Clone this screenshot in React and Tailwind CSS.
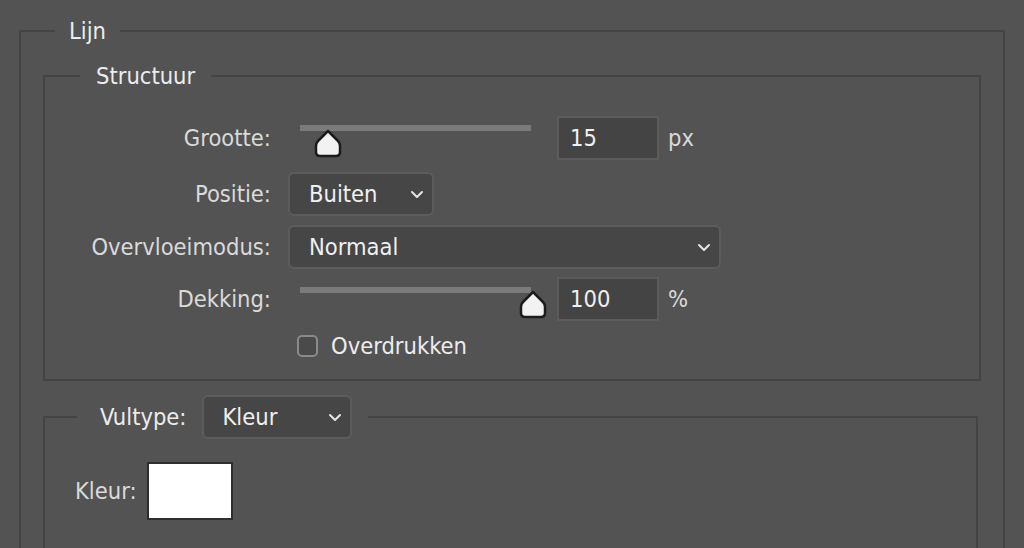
import React from "react";

const font = { fontFamily: '"DejaVu Sans Condensed", "DejaVu Sans", Tahoma, sans-serif' };

const Chevron = () => (
  <svg width="14" height="9" viewBox="0 0 14 9" fill="none">
    <path d="M2 2 L7 7 L12 2" stroke="#e6e6e6" strokeWidth="2" strokeLinecap="round" strokeLinejoin="round" />
  </svg>
);

const Thumb = () => (
  <svg width="28" height="29" viewBox="0 0 28 29">
    <path
      d="M14 2 L24 12 Q26 14 26 17 L26 23 Q26 27 22 27 L6 27 Q2 27 2 23 L2 17 Q2 14 4 12 Z"
      fill="#f2f2f2"
      stroke="#1c1c1c"
      strokeWidth="2.5"
      strokeLinejoin="round"
    />
  </svg>
);

const Label = ({ children }) => (
  <div className="w-[226px] shrink-0 text-right text-[#dadada]">{children}</div>
);

const Slider = ({ pos, trackTop }) => (
  <div className="relative ml-[29px] h-[44px] w-[231px] shrink-0">
    <div className={`absolute left-0 right-0 h-[6px] bg-[#7b7b7b] ${trackTop}`} />
    <div className="absolute" style={{ left: pos - 14, top: 13 }}>
      <Thumb />
    </div>
  </div>
);

const NumberBox = ({ value, unit }) => (
  <>
    <div className="ml-[26px] flex h-[44px] w-[102px] items-center border-2 border-[#5c5c5c] bg-[#444444] pl-[11px] text-[#f0f0f0]">
      {value}
    </div>
    <div className="ml-[9px] text-[#dadada]">{unit}</div>
  </>
);

const Select = ({ value, width, className = "" }) => (
  <div
    className={`flex h-[44px] items-center justify-between rounded-[6px] border-2 border-[#5c5c5c] bg-[#464646] pl-[19px] pr-[8px] text-[#f0f0f0] ${width} ${className}`}
  >
    <span>{value}</span>
    <Chevron />
  </div>
);

export default function App() {
  return (
    <div className="h-[548px] overflow-hidden bg-[#535353] px-[19px] pt-[20px] text-[23.5px] leading-[22px]" style={font}>
      <fieldset className="border-2 border-[#444444] px-[22px] pt-[23px] pb-[200px] rounded-[2px]">
        <legend className="ml-[12px] px-[14px] text-[#ececec]">Lijn</legend>

        <fieldset className="border-2 border-[#444444] pt-[29px] pb-[22px] rounded-[2px]">
          <legend className="ml-[35px] px-[16px] text-[#ececec]">Structuur</legend>

          <div className="flex h-[44px] items-center">
            <Label>Grootte:</Label>
            <Slider pos={28} trackTop="top-[9px]" />
            <NumberBox value="15" unit="px" />
          </div>

          <div className="mt-[12px] flex h-[44px] items-center">
            <Label>Positie:</Label>
            <Select value="Buiten" width="w-[146px]" className="ml-[17px]" />
          </div>

          <div className="mt-[9px] flex h-[44px] items-center">
            <Label>Overvloeimodus:</Label>
            <Select value="Normaal" width="w-[433px]" className="ml-[17px]" />
          </div>

          <div className="mt-[8px] flex h-[44px] items-center">
            <Label>Dekking:</Label>
            <Slider pos={233} trackTop="top-[10px]" />
            <NumberBox value="100" unit="%" />
          </div>

          <div className="mt-[14px] flex h-[22px] items-center">
            <div className="w-[226px] shrink-0" />
            <div className="ml-[26px] h-[22px] w-[21px] rounded-[5px] border-2 border-[#8a8a8a] bg-[#4a4a4a]" />
            <span className="ml-[13px] text-[#ececec]">Overdrukken</span>
          </div>
        </fieldset>

        <fieldset className="mt-[14px] mr-[3px] border-2 border-[#444444] pt-[23px] pb-[200px] rounded-[2px]">
          <legend className="ml-[32px] pl-[23px] pr-[16px]">
            <div className="flex items-center">
              <span className="text-[#ececec]">Vultype:</span>
              <Select value="Kleur" width="w-[150px]" className="ml-[15px]" />
            </div>
          </legend>

          <div className="flex items-center pl-[30px]">
            <span className="text-[#dadada]">Kleur:</span>
            <div className="ml-[10px] h-[58px] w-[86px] border-2 border-[#2e2e2e] bg-white" />
          </div>
        </fieldset>
      </fieldset>
    </div>
  );
}
